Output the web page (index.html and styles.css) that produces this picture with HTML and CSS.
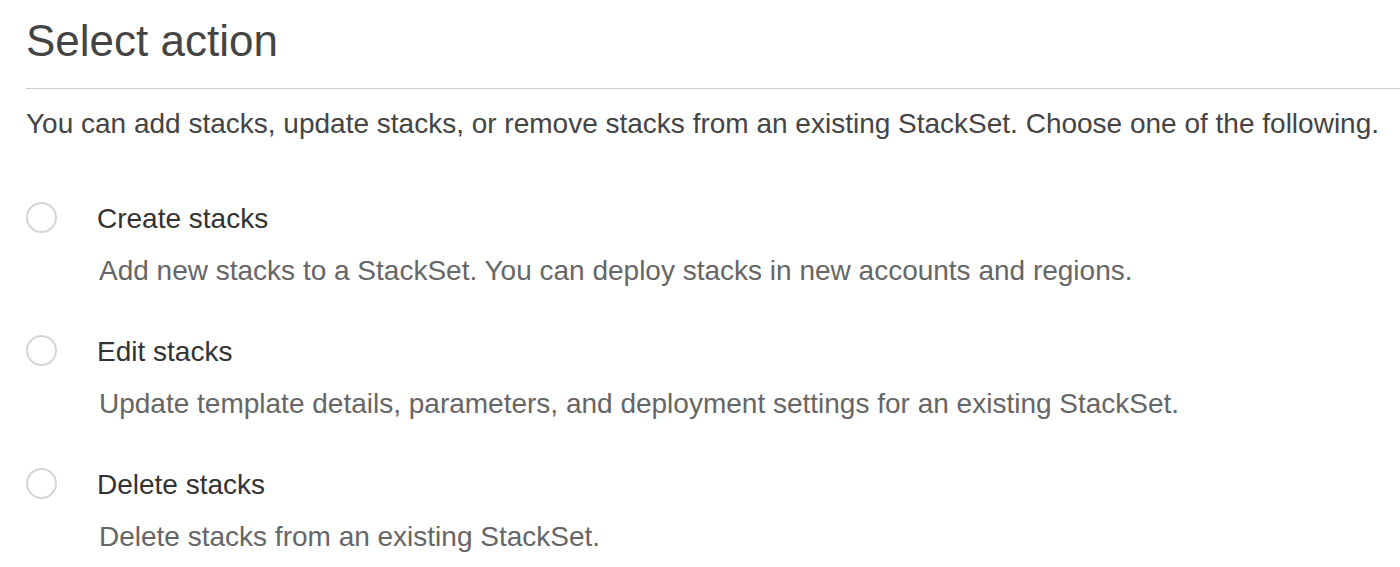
FILE: index.html
```html
<!DOCTYPE html>
<html lang="en">
<head>
    <meta charset="UTF-8">
    <meta name="viewport" content="width=device-width, initial-scale=1.0">
    <title>Select action</title>
    <link rel="stylesheet" href="styles.css">
</head>
<body>

    <main class="panel">
        <h1 class="panel-title">Select action</h1>
        <p class="panel-intro">You can add stacks, update stacks, or remove stacks from an existing StackSet. Choose one of the following.</p>

        <!-- Options -->
        <div class="options">
            <label class="option">
                <input type="radio" name="action" value="create">
                <span class="option-text">
                    <span class="option-name">Create stacks</span>
                    <span class="option-desc">Add new stacks to a StackSet. You can deploy stacks in new accounts and regions.</span>
                </span>
            </label>
            <label class="option">
                <input type="radio" name="action" value="edit">
                <span class="option-text">
                    <span class="option-name">Edit stacks</span>
                    <span class="option-desc">Update template details, parameters, and deployment settings for an existing StackSet.</span>
                </span>
            </label>
            <label class="option">
                <input type="radio" name="action" value="delete">
                <span class="option-text">
                    <span class="option-name">Delete stacks</span>
                    <span class="option-desc">Delete stacks from an existing StackSet.</span>
                </span>
            </label>
        </div>
    </main>

</body>
</html>
```

FILE: styles.css
```css
* {
    margin: 0;
    padding: 0;
    box-sizing: border-box;
}

body {
    font-family: 'Liberation Sans', Arial, sans-serif;
    background-color: #ffffff;
    color: #444;
}

.panel {
    padding: 15px 0 0 26px;
}

.panel-title {
    font-size: 44px;
    font-weight: normal;
    line-height: 52px;
    color: #444;
    padding-bottom: 21px;
    border-bottom: 1px solid #ccc;
}

.panel-intro {
    font-size: 28px;
    line-height: 32px;
    margin-top: 19px;
    color: #444;
}

/* Options */
.options {
    display: flex;
    flex-direction: column;
    gap: 49px;
    margin-top: 63px;
}

.option {
    display: flex;
    align-items: flex-start;
    cursor: pointer;
}

.option input {
    appearance: none;
    width: 31px;
    height: 31px;
    border: 2px solid #d5d5d5;
    border-radius: 50%;
    background-color: #fff;
    margin-top: -1px;
    flex-shrink: 0;
}

.option-text {
    display: flex;
    flex-direction: column;
    margin-left: 40px;
}

.option-name {
    font-size: 28px;
    line-height: 32px;
    color: #333;
}

.option-desc {
    font-size: 28px;
    line-height: 32px;
    color: #666;
    margin-top: 20px;
    margin-left: 2px;
}
```
